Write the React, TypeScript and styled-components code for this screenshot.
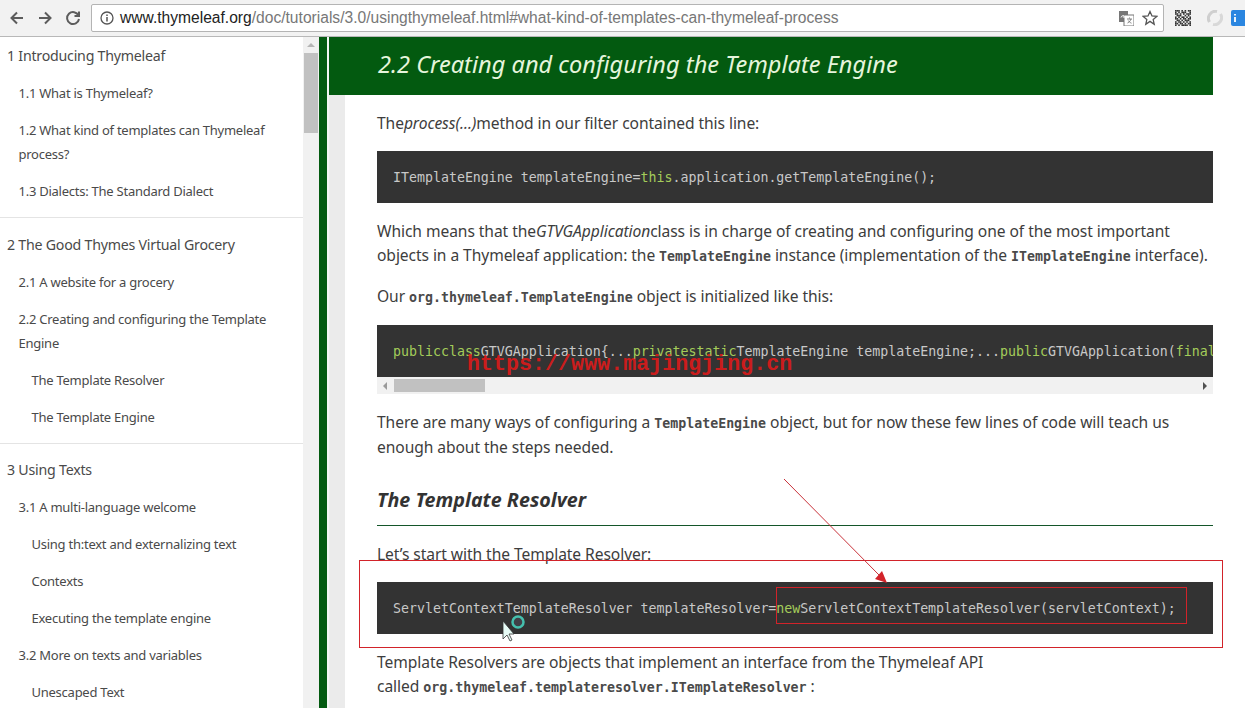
import React from "react";
import styled, { createGlobalStyle } from "styled-components";

const Global = createGlobalStyle`
  html, body { margin: 0; padding: 0; height: 708px; overflow: hidden; background: #fff; }
  #root { height: 708px; }
`;

const Page = styled.div`
  position: relative;
  width: 1245px;
  height: 708px;
  overflow: hidden;
  display: flex;
  flex-direction: column;
  font-family: "Noto Sans", "Open Sans", sans-serif;
  color: #333;
`;

const Toolbar = styled.div`
  height: 36px;
  flex: none;
  display: flex;
  align-items: center;
  background: #f2f2f2;
  border-bottom: 1px solid #b8b8b8;
  box-sizing: content-box;
`;
const NavIcon = styled.svg`
  width: 16px;
  height: 16px;
  margin-left: 9px;
  margin-right: 3px;
  flex: none;
  stroke: #5c5c5c;
  stroke-width: 2;
  fill: none;
`;
const Omnibox = styled.div`
  margin-left: 7px;
  width: 1073px;
  height: 28px;
  box-sizing: border-box;
  flex: none;
  display: flex;
  align-items: center;
  background: #fff;
  border: 1px solid #b4b4b4;
  border-radius: 2px;
  padding: 0 5px 0 8px;
  font-family: "Liberation Sans", Arial, sans-serif;
  font-size: 15.6px;
  white-space: nowrap;
`;
const Host = styled.span`color: #222;`;
const UrlPath = styled.span`color: #777; flex: 1; `;
const ExtSlot = styled.div`
  flex: none;
  margin-left: ${(p: { $ml: number }) => p.$ml}px;
  display: flex;
`;

const Body = styled.div`
  flex: 1;
  display: flex;
  min-height: 0;
`;
const Sidebar = styled.nav`
  width: 303px;
  flex: none;
  padding-top: 0.5px;
  box-sizing: border-box;
  overflow: hidden;
`;
const Group = styled.div`
  padding: 0 0 7.5px;
  margin-bottom: 8px;
  border-bottom: 1px solid #e4e4e4;
`;
const Item = styled.div<{ $lvl: number }>`
  padding: 6.5px 0 6.5px ${(p) => [7, 18.5, 31.5][p.$lvl]}px;
  font-size: ${(p) => (p.$lvl === 0 ? 14.2 : 13)}px;
  letter-spacing: ${(p) => (p.$lvl === 0 ? -0.23 : -0.25)}px;
  line-height: 24px;
  color: #4a4a4a;
  white-space: nowrap;
`;
const SideScroll = styled.div`
  width: 16px;
  flex: none;
  background: #f1f1f1;
  display: flex;
  flex-direction: column;
  align-items: center;
`;
const ScrollUp = styled.div`
  width: 0;
  height: 0;
  margin-top: 6px;
  border-left: 4px solid transparent;
  border-right: 4px solid transparent;
  border-bottom: 4px solid #b5b5b5;
`;
const ScrollThumb = styled.div`
  width: 14px;
  height: 80px;
  margin-top: 6px;
  background: #c1c1c1;
`;
const GreenRule = styled.div`
  width: 8px;
  flex: none;
  background: #035a10;
`;
const Gutter = styled.div`
  width: 2px;
  flex: none;
  background: #f3f6f3;
`;
const Main = styled.main`
  width: 884px;
  flex: none;
  overflow: hidden;
  display: flex;
  flex-direction: column;
`;
const Banner = styled.h2`
  margin: 0;
  height: 58px;
  flex: none;
  box-sizing: border-box;
  padding: 0 0 4.5px 49px;
  display: flex;
  align-items: center;
  background: #035a10;
  color: #e6f5dc;
  font-style: italic;
  font-weight: 400;
  font-size: 23.6px;
  white-space: nowrap;
`;
const Content = styled.div`
  flex: 1;
  border-left: 16px solid #ebebeb;
  padding: 16px 0 0 32px;
`;
const Para = styled.p<{ $after: number }>`
  margin: 0 0 ${(p) => p.$after}px;
  font-size: 15.6px;
  line-height: 24.5px;
  color: #3d3d3d;
  white-space: nowrap;
  letter-spacing: -0.07px;
`;
const Inline = styled.code`
  font-family: "DejaVu Sans Mono", monospace;
  font-weight: 700;
  font-size: 13.28px;
  line-height: 0;
  letter-spacing: 0;
  color: #4a4a4a;
`;
const CodeBlock = styled.pre<{ $after: number }>`
  margin: 0 0 ${(p) => p.$after}px;
  height: 52px;
  box-sizing: border-box;
  padding: 2px 0 0 16px;
  display: flex;
  align-items: center;
  background: #333;
  color: #c8c8c8;
  font-family: "DejaVu Sans Mono", monospace;
  font-size: 13.28px;
  overflow: hidden;
  white-space: pre;
`;
const ScrollCode = styled(CodeBlock)`
  padding-top: 0;
`;
const Kw = styled.span`color: #a4cc5a;`;
const HBar = styled.div`
  height: 17px;
  margin-bottom: 16px;
  background: #f1f1f1;
  display: flex;
  align-items: center;
  justify-content: space-between;
  padding: 0 6px;
`;
const HThumb = styled.div`
  position: absolute;
  left: 394px;
  width: 91px;
  height: 13px;
  background: #c1c1c1;
`;
const ArrowL = styled.div`
  width: 0; height: 0;
  border-top: 4px solid transparent;
  border-bottom: 4px solid transparent;
  border-right: 4px solid #9a9a9a;
`;
const ArrowR = styled.div`
  width: 0; height: 0;
  border-top: 4px solid transparent;
  border-bottom: 4px solid transparent;
  border-left: 4px solid #505050;
`;
const SubHead = styled.h3`
  margin: 0 0 16px;
  padding-bottom: 6px;
  height: 38px;
  box-sizing: content-box;
  line-height: 38px;
  border-bottom: 1px solid #14562a;
  font-style: italic;
  font-weight: 700;
  font-size: 19.7px;
  color: #333;
`;
const Watermark = styled.div`
  position: absolute;
  left: 467px;
  top: 352px;
  font-family: "Liberation Mono", monospace;
  font-size: 21.7px;
  font-weight: 700;
  line-height: 26px;
  color: rgba(225, 25, 25, 0.9);
  white-space: nowrap;
`;
const Overlay = styled.svg`
  position: absolute;
  left: 0;
  top: 0;
  width: 1245px;
  height: 708px;
  pointer-events: none;
`;

const toc: { l: number; t: React.ReactNode }[][] = [
  [
    { l: 0, t: "1 Introducing Thymeleaf" },
    { l: 1, t: "1.1 What is Thymeleaf?" },
    { l: 1, t: <>1.2 What kind of templates can Thymeleaf<br />process?</> },
    { l: 1, t: "1.3 Dialects: The Standard Dialect" },
  ],
  [
    { l: 0, t: "2 The Good Thymes Virtual Grocery" },
    { l: 1, t: "2.1 A website for a grocery" },
    { l: 1, t: <>2.2 Creating and configuring the Template<br />Engine</> },
    { l: 2, t: "The Template Resolver" },
    { l: 2, t: "The Template Engine" },
  ],
  [
    { l: 0, t: "3 Using Texts" },
    { l: 1, t: "3.1 A multi-language welcome" },
    { l: 2, t: "Using th:text and externalizing text" },
    { l: 2, t: "Contexts" },
    { l: 2, t: "Executing the template engine" },
    { l: 1, t: "3.2 More on texts and variables" },
    { l: 2, t: "Unescaped Text" },
  ],
];

const qrCells = [
  "1110101011", "1010111001", "1101010111", "0111001010", "1010110101",
  "1101011011", "0110101110", "1011010101", "1101101011", "1010111101",
];

export default function App() {
  return (
    <Page>
      <Global />
      <Toolbar>
        <NavIcon viewBox="0 0 16 16"><path d="M14 8H3M8 2.500L2.500 8 8 13.500" /></NavIcon>
        <NavIcon viewBox="0 0 16 16"><path d="M2 8h11M8 2.500L13.500 8 8 13.500" /></NavIcon>
        <NavIcon viewBox="0 0 16 16"><path d="M13.500 5.500A6 6 0 1 0 14 9M14 1.500v4.500H9.500" /></NavIcon>
        <Omnibox>
          <svg width="14" height="14" viewBox="0 0 14 14" style={{ flex: "none", marginRight: 6 }}>
            <circle cx="7" cy="7" r="6" fill="none" stroke="#555" strokeWidth="1.300" />
            <path d="M7 6v4.500M7 3.400v1.600" stroke="#555" strokeWidth="1.500" />
          </svg>
          <Host>www.thymeleaf.org</Host>
          <UrlPath>/doc/tutorials/3.0/usingthymeleaf.html#what-kind-of-templates-can-thymeleaf-process</UrlPath>
          <svg width="15" height="15" viewBox="0 0 15 15" style={{ flex: "none", marginRight: 8 }}>
            <rect x="0" y="0" width="9" height="11" fill="#777" />
            <rect x="5" y="4" width="10" height="11" fill="#fff" stroke="#777" />
            <path d="M8 8h5M10.500 6.500v1M12 8c-.6 2-2 3.500-3.500 4M9.300 9.500c.6 1.200 1.600 2 3.200 2.700" fill="none" stroke="#666" strokeWidth=".8" />
            <path d="M2 6.500c0-2 3.500-2.500 4-.8M6 6H3.800" fill="none" stroke="#fff" strokeWidth="1" />
          </svg>
          <svg width="16" height="16" viewBox="0 0 16 16" style={{ flex: "none" }}>
            <path d="M8 1.500l2 4.400 4.800.5-3.600 3.200 1 4.700L8 11.400l-4.200 2.900 1-4.700L1.200 6.400 6 5.900z" fill="none" stroke="#555" strokeWidth="1.300" />
          </svg>
        </Omnibox>
        <ExtSlot $ml={11}>
          <svg width="16" height="16" viewBox="0 0 10 10">
            {qrCells.flatMap((row, y) =>
              row.split("").map((c, x) =>
                c === "1" ? <rect key={`${x}-${y}`} x={x} y={y} width="1" height="1" fill="#333" /> : null
              )
            )}
          </svg>
        </ExtSlot>
        <ExtSlot $ml={16}>
          <svg width="16" height="16" viewBox="0 0 16 16">
            <path d="M2.500 12A7 7 0 0 1 10 1.500" fill="none" stroke="#cfcfcf" strokeWidth="3" />
            <path d="M13.500 4A7 7 0 0 1 6 14.500" fill="none" stroke="#d8d8d8" strokeWidth="3" />
          </svg>
        </ExtSlot>
        <ExtSlot $ml={8}>
          <svg width="16" height="16" viewBox="0 0 16 16" style={{ flex: "none" }}>
            <rect x="0" y="0" width="16" height="16" rx="2" fill="#2b86e0" />
            <path d="M4 4v1.500M4 7v5" stroke="#fff" strokeWidth="1.800" />
          </svg>
        </ExtSlot>
      </Toolbar>
      <Body>
        <Sidebar>
          {toc.map((g, i) =>
            i < 2 ? (
              <Group key={i}>
                {g.map((it, j) => <Item key={j} $lvl={it.l}>{it.t}</Item>)}
              </Group>
            ) : (
              <div key={i}>
                {g.map((it, j) => <Item key={j} $lvl={it.l}>{it.t}</Item>)}
              </div>
            )
          )}
        </Sidebar>
        <SideScroll>
          <ScrollUp />
          <ScrollThumb />
        </SideScroll>
        <GreenRule />
        <Gutter />
        <Main>
          <Banner>2.2 Creating and configuring the Template Engine</Banner>
          <Content>
            <Para $after={15}>The<em>process(…)</em>method in our filter contained this line:</Para>
            <CodeBlock $after={16}>ITemplateEngine templateEngine=<Kw>this</Kw>.application.getTemplateEngine();</CodeBlock>
            <Para $after={16}>
              Which means that the<em>GTVGApplication</em>class is in charge of creating and configuring one of the most important<br />
              objects in a Thymeleaf application: the <Inline>TemplateEngine</Inline> instance (implementation of the <Inline>ITemplateEngine</Inline> interface).
            </Para>
            <Para $after={17}>Our <Inline>org.thymeleaf.TemplateEngine</Inline> object is initialized like this:</Para>
            <ScrollCode $after={0}>
              <Kw>public</Kw><Kw>class</Kw>GTVGApplication{"{"}...<Kw>private</Kw><Kw>static</Kw>TemplateEngine templateEngine;...<Kw>public</Kw>GTVGApplication(<Kw>final</Kw> ServletContext servletContext)
            </ScrollCode>
            <HBar>
              <ArrowL />
              <HThumb />
              <ArrowR />
            </HBar>
            <Para $after={22}>
              There are many ways of configuring a <Inline>TemplateEngine</Inline> object, but for now these few lines of code will teach us<br />
              enough about the steps needed.
            </Para>
            <SubHead>The Template Resolver</SubHead>
            <Para $after={15}>Let’s start with the Template Resolver:</Para>
            <CodeBlock $after={16}>ServletContextTemplateResolver templateResolver=<Kw>new</Kw>ServletContextTemplateResolver(servletContext);</CodeBlock>
            <Para $after={0}>
              Template Resolvers are objects that implement an interface from the Thymeleaf API<br />
              called <Inline>org.thymeleaf.templateresolver.ITemplateResolver</Inline> :
            </Para>
          </Content>
        </Main>
      </Body>
      <Watermark>https://www.majingjing.cn</Watermark>
      <Overlay viewBox="0 0 1245 708">
        <rect x="359.500" y="560.500" width="863" height="87" fill="none" stroke="#d2232a" />
        <rect x="776.500" y="587.500" width="410" height="36" fill="none" stroke="#d2232a" />
        <path d="M784 479L880 576" stroke="#c8323a" strokeWidth="1" />
        <path d="M887 583L875 579 882 571z" fill="#d2232a" />
        <path d="M503 621v18l4-4 3 6 2-1-3-6h5z" fill="#e6fbf5" stroke="#333" strokeWidth=".8" />
        <circle cx="518" cy="622" r="5.500" fill="#556" fillOpacity=".4" stroke="#45c0ae" strokeWidth="2.500" />
      </Overlay>
    </Page>
  );
}
